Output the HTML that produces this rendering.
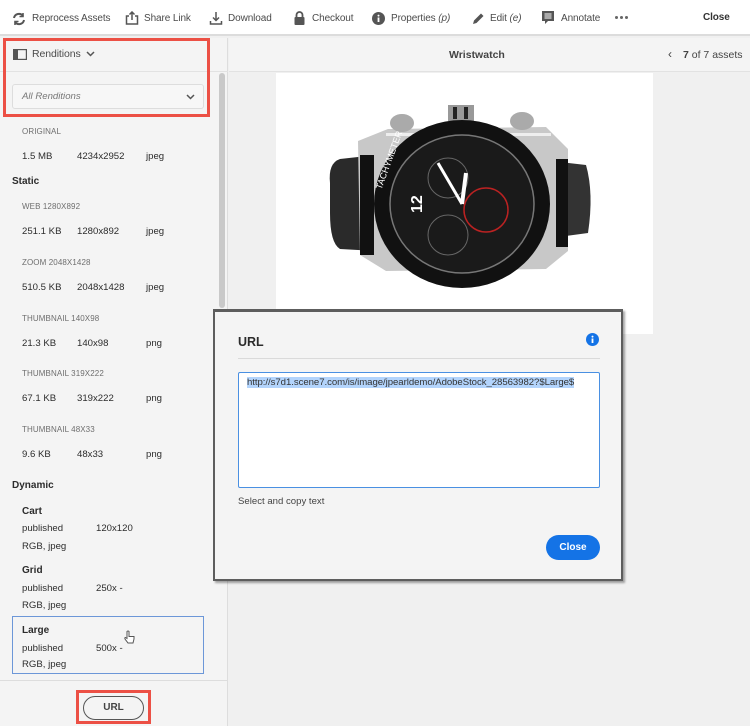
<!DOCTYPE html>
<html><head><meta charset="utf-8"><style>
*{margin:0;padding:0;box-sizing:border-box}
body{width:750px;height:726px;overflow:hidden;background:#f0f0f0;font-family:"Liberation Sans",sans-serif;color:#4b4b4b;position:relative}
.a{position:absolute;white-space:nowrap}
.tb{font-size:10px;color:#4b4b4b;letter-spacing:-0.1px}
.lab{font-size:8px;color:#6e6e6e;letter-spacing:.1px}
.v{font-size:9.6px;color:#2c2c2c}
.b{font-size:10px;font-weight:bold;color:#2c2c2c}
</style></head><body>
<!-- toolbar -->
<div class="a" style="left:0;top:0;width:750px;height:36px;background:#fff;border-bottom:2px solid #dcdcdc"></div>
<svg class="a" style="left:12px;top:12px" width="14" height="14" viewBox="0 0 14 14" fill="none" stroke="#555" stroke-width="2"><path d="M2 6a5 5 0 0 1 9-2M12 8a5 5 0 0 1-9 2"/><path d="M11 1v3.5H7.5M3 13V9.5h3.5" stroke-width="1.6"/></svg>
<div class="a tb" style="left:32px;top:13px">Reprocess Assets</div>
<svg class="a" style="left:125px;top:11px" width="14" height="14" viewBox="0 0 14 14" fill="none" stroke="#555" stroke-width="1.5"><path d="M4 5H1.5v8h11V5H10M7 9V1M4.5 3.5L7 1l2.5 2.5"/></svg>
<div class="a tb" style="left:144px;top:13px">Share Link</div>
<svg class="a" style="left:209px;top:11px" width="14" height="14" viewBox="0 0 14 14" fill="none" stroke="#555" stroke-width="1.5"><path d="M7 1v8M4 6.5L7 9.5 10 6.5M1.5 10v3h11v-3"/></svg>
<div class="a tb" style="left:228px;top:13px">Download</div>
<svg class="a" style="left:294px;top:11px" width="11" height="14" viewBox="0 0 11 14"><path d="M2.5 6V4a3 3 0 0 1 6 0v2" fill="none" stroke="#555" stroke-width="1.8"/><rect x="0.5" y="6" width="10" height="8" rx="1" fill="#555"/></svg>
<div class="a tb" style="left:312px;top:13px">Checkout</div>
<svg class="a" style="left:372px;top:12px" width="13" height="13" viewBox="0 0 13 13"><circle cx="6.5" cy="6.5" r="6.5" fill="#555"/><rect x="5.6" y="5.5" width="1.8" height="4.5" fill="#fff"/><circle cx="6.5" cy="3.6" r="1" fill="#fff"/></svg>
<div class="a tb" style="left:391px;top:13px">Properties <i>(p)</i></div>
<svg class="a" style="left:472px;top:12px" width="13" height="13" viewBox="0 0 13 13"><path d="M1 12l1-3.5 7-7 2.5 2.5-7 7z" fill="#555"/></svg>
<div class="a tb" style="left:490px;top:13px">Edit <i>(e)</i></div>
<svg class="a" style="left:542px;top:11px" width="12" height="14" viewBox="0 0 12 14"><path d="M0 0h12v10H6l-3 3v-3H0z" fill="#555"/><path d="M2.5 3h7M2.5 5h7M2.5 7h7" stroke="#fff" stroke-width="1"/></svg>
<div class="a tb" style="left:561px;top:13px">Annotate</div>
<div class="a" style="left:615px;top:16px;width:3px;height:3px;border-radius:2px;background:#666;box-shadow:5px 0 #666,10px 0 #666"></div>
<div class="a tb" style="left:703px;top:12px;font-weight:bold;color:#333">Close</div>

<!-- left panel -->
<div class="a" style="left:0;top:38px;width:228px;height:688px;background:#f4f4f4;border-right:1px solid #ddd"></div>
<div class="a" style="left:0;top:71px;width:228px;height:1px;background:#e2e2e2"></div>
<svg class="a" style="left:13px;top:49px" width="14" height="11" viewBox="0 0 14 11"><rect x=".6" y=".6" width="12.8" height="9.8" fill="none" stroke="#555" stroke-width="1.2"/><rect x="1" y="1" width="4" height="9" fill="#555"/></svg>
<div class="a tb" style="left:32px;top:48px;font-size:10.5px">Renditions</div>
<svg class="a" style="left:86px;top:51px" width="9" height="6" viewBox="0 0 9 6"><path d="M1 1l3.5 3.5L8 1" fill="none" stroke="#555" stroke-width="1.5"/></svg>
<div class="a" style="left:12px;top:84px;width:192px;height:25px;background:#f7f7f7;border:1px solid #ddd;border-radius:3px"></div>
<div class="a" style="left:22px;top:91px;font-size:9.6px;font-style:italic;color:#777">All Renditions</div>
<svg class="a" style="left:186px;top:94px" width="9" height="6" viewBox="0 0 9 6"><path d="M1 1l3.5 3.5L8 1" fill="none" stroke="#555" stroke-width="1.5"/></svg>
<div class="a" style="left:219px;top:73px;width:6px;height:235px;background:#c9c9c9;border-radius:3px"></div>
<div class="a" style="left:3px;top:38px;width:207px;height:79px;border:3px solid #ec5045"></div>

<div class="a lab" style="left:22px;top:127px">ORIGINAL</div>
<div class="a v" style="left:22px;top:151px">1.5 MB</div><div class="a v" style="left:77px;top:151px">4234x2952</div><div class="a v" style="left:146px;top:151px">jpeg</div>
<div class="a b" style="left:12px;top:176px">Static</div>
<div class="a lab" style="left:22px;top:202px">WEB 1280X892</div>
<div class="a v" style="left:22px;top:226px">251.1 KB</div><div class="a v" style="left:77px;top:226px">1280x892</div><div class="a v" style="left:146px;top:226px">jpeg</div>
<div class="a lab" style="left:22px;top:258px">ZOOM 2048X1428</div>
<div class="a v" style="left:22px;top:282px">510.5 KB</div><div class="a v" style="left:77px;top:282px">2048x1428</div><div class="a v" style="left:146px;top:282px">jpeg</div>
<div class="a lab" style="left:22px;top:314px">THUMBNAIL 140X98</div>
<div class="a v" style="left:22px;top:338px">21.3 KB</div><div class="a v" style="left:77px;top:338px">140x98</div><div class="a v" style="left:146px;top:338px">png</div>
<div class="a lab" style="left:22px;top:369px">THUMBNAIL 319X222</div>
<div class="a v" style="left:22px;top:393px">67.1 KB</div><div class="a v" style="left:77px;top:393px">319x222</div><div class="a v" style="left:146px;top:393px">png</div>
<div class="a lab" style="left:22px;top:425px">THUMBNAIL 48X33</div>
<div class="a v" style="left:22px;top:449px">9.6 KB</div><div class="a v" style="left:77px;top:449px">48x33</div><div class="a v" style="left:146px;top:449px">png</div>
<div class="a b" style="left:12px;top:480px">Dynamic</div>
<div class="a b" style="left:22px;top:506px">Cart</div>
<div class="a v" style="left:22px;top:523px">published</div><div class="a v" style="left:96px;top:523px">120x120</div>
<div class="a v" style="left:22px;top:541px">RGB, jpeg</div>
<div class="a b" style="left:22px;top:565px">Grid</div>
<div class="a v" style="left:22px;top:583px">published</div><div class="a v" style="left:96px;top:583px">250x -</div>
<div class="a v" style="left:22px;top:600px">RGB, jpeg</div>
<div class="a" style="left:12px;top:616px;width:192px;height:58px;border:1px solid #6c97d8"></div>
<div class="a b" style="left:22px;top:625px">Large</div>
<div class="a v" style="left:22px;top:643px">published</div><div class="a v" style="left:96px;top:643px">500x -</div>
<div class="a v" style="left:22px;top:659px">RGB, jpeg</div>
<svg class="a" style="left:124px;top:630px" width="11" height="14" viewBox="0 0 11 14"><path d="M3 1.5v7L1.5 7.5Q.5 7.5 1 9l3 4h5l1-4V6.5H5V1.5Q4 .5 3 1.5z" fill="#fff" stroke="#555" stroke-width="1"/></svg>
<div class="a" style="left:0;top:680px;width:228px;height:1px;background:#ddd"></div>
<div class="a" style="left:76px;top:690px;width:75px;height:34px;border:3px solid #ec5045"></div>
<div class="a" style="left:83px;top:696px;width:61px;height:24px;border:1.5px solid #555;border-radius:12px;background:#f4f4f4;font-size:10px;font-weight:bold;color:#444;text-align:center;line-height:21px">URL</div>

<!-- right header -->
<div class="a" style="left:229px;top:38px;width:521px;height:34px;background:#f4f4f4;border-bottom:1px solid #e2e2e2"></div>
<div class="a" style="left:449px;top:49px;font-size:10.5px;font-weight:bold;color:#444">Wristwatch</div>
<div class="a" style="left:668px;top:47px;font-size:12px;color:#444">‹</div>
<div class="a" style="left:683px;top:49px;font-size:10.5px;color:#444"><b>7</b> of 7 assets</div>

<!-- image -->
<div class="a" style="left:276px;top:73px;width:377px;height:261px;background:#fff"></div>
<svg class="a" style="left:276px;top:73px" width="377" height="261" viewBox="0 0 377 261">
<path d="M54 110 Q52 90 64 86 L100 82 L100 178 L64 176 Q54 170 54 140z" fill="#2a2a2a"/>
<path d="M275 88 L310 92 Q318 120 312 160 L275 165z" fill="#333"/>
<path d="M82 68 L112 56 L270 54 L292 76 L292 178 L270 196 L110 198 L84 182z" fill="#c8c8c8"/>
<rect x="84" y="82" width="14" height="100" fill="#111"/>
<rect x="280" y="86" width="12" height="88" fill="#111"/>
<rect x="110" y="60" width="165" height="3" fill="#eee"/>
<rect x="172" y="32" width="26" height="16" fill="#999"/><rect x="177" y="34" width="4" height="12" fill="#222"/><rect x="188" y="34" width="4" height="12" fill="#222"/>
<ellipse cx="126" cy="50" rx="12" ry="9" fill="#aaa"/><ellipse cx="246" cy="48" rx="12" ry="9" fill="#aaa"/>
<ellipse cx="186" cy="131" rx="88" ry="84" fill="#111"/>
<ellipse cx="186" cy="131" rx="72" ry="69" fill="#1a1a1a" stroke="#777" stroke-width="1.5"/>
<circle cx="210" cy="137" r="22" fill="none" stroke="#b22" stroke-width="1.5"/>
<circle cx="172" cy="105" r="20" fill="none" stroke="#666"/>
<circle cx="172" cy="162" r="20" fill="none" stroke="#666"/>
<text x="132" y="140" fill="#fff" font-size="16" font-weight="bold" font-family="Liberation Sans" transform="rotate(-90 139 133)">12</text>
<path d="M186 131 L162 90" stroke="#fff" stroke-width="3"/><path d="M186 131 L190 100" stroke="#fff" stroke-width="4"/>
<text x="356" y="174" fill="#fff" font-size="15" font-weight="bold" font-family="Liberation Sans">8</text>
<text x="92" y="118" fill="#fff" font-size="9" font-family="Liberation Sans" transform="rotate(-70 98 108)">TACHYMETER</text>
</svg>

<!-- dialog -->
<div class="a" style="left:213px;top:309px;width:410px;height:272px;background:#f4f4f4;border:2px solid #5d5d5d;border-top-width:3px;box-shadow:2px 2px 2px rgba(0,0,0,.35)"></div>
<div class="a" style="left:238px;top:335px;font-size:12.5px;font-weight:bold;color:#2c2c2c">URL</div>
<svg class="a" style="left:586px;top:333px" width="13" height="13" viewBox="0 0 13 13"><circle cx="6.5" cy="6.5" r="6.5" fill="#1473e6"/><rect x="5.6" y="5.5" width="1.8" height="4.5" fill="#fff"/><circle cx="6.5" cy="3.6" r="1" fill="#fff"/></svg>
<div class="a" style="left:238px;top:358px;width:362px;height:1px;background:#dadada"></div>
<div class="a" style="left:238px;top:372px;width:362px;height:116px;background:#fff;border:1px solid #4a90e2;border-radius:2px"></div>
<div class="a" style="left:247px;top:377px;font-size:9.6px;color:#333;background:#b3d4fc;letter-spacing:-0.05px">http://s7d1.scene7.com/is/image/jpearldemo/AdobeStock_28563982?$Large$</div>
<div class="a" style="left:238px;top:496px;font-size:9.6px;color:#444">Select and copy text</div>
<div class="a" style="left:546px;top:535px;width:54px;height:25px;background:#1473e6;border-radius:13px;color:#fff;font-size:10px;font-weight:bold;text-align:center;line-height:25px">Close</div>
</body></html>
